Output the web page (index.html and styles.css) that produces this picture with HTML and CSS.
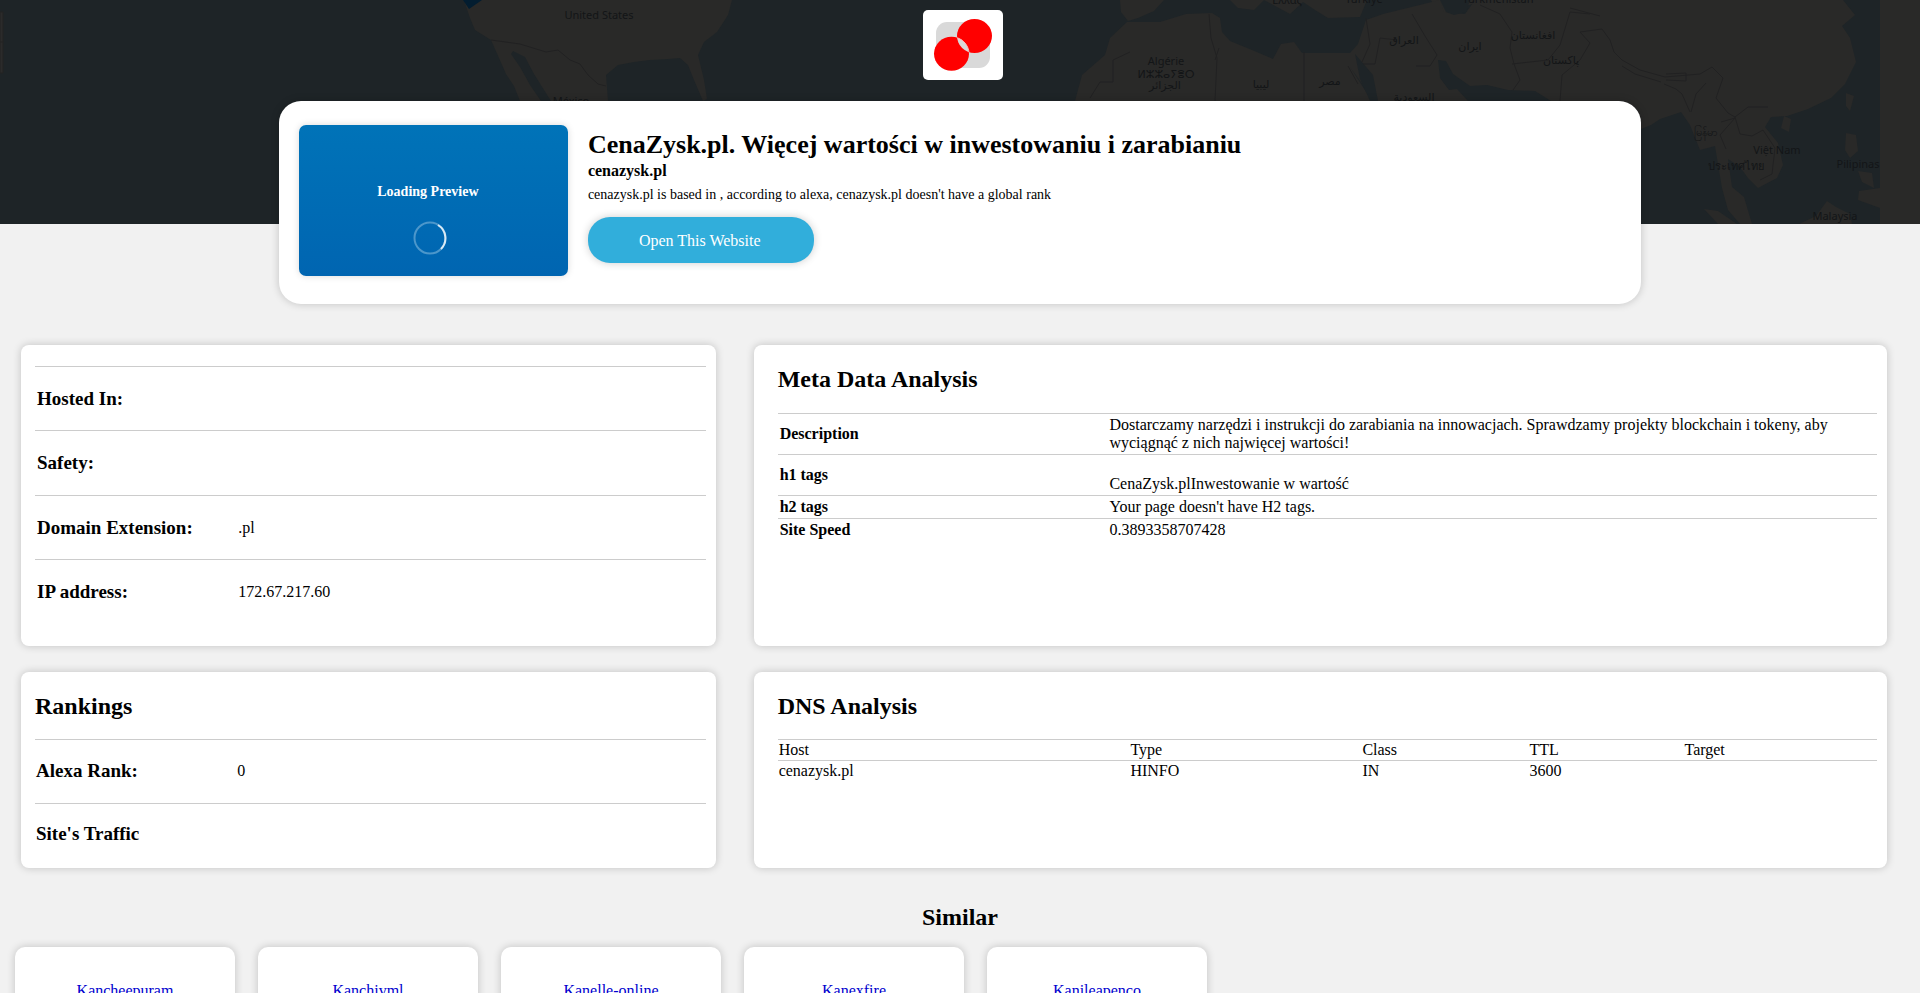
FILE: index.html
```html
<!DOCTYPE html>
<html lang="en">
<head>
<meta charset="utf-8">
<meta name="viewport" content="width=device-width, initial-scale=1">
<title>cenazysk.pl</title>
<link rel="stylesheet" href="styles.css">
</head>
<body>
<header class="hero">
  <svg class="map" viewBox="0 0 1920 224" preserveAspectRatio="xMidYMin slice" aria-hidden="true">
    <rect class="sea" width="1920" height="224"/>
    <path class="zoom-box" d="M0 12H3V73H0zM0 42H3"/>
    <g class="land">
      <path d="M464 0L470 18L475 30L491 40L499 58L506 74L514 86L520 101H541L530 85L520 67L511 54L513 51L525 57L534 74L551 101H608L606 75L618 65L634 62L650 60L668 59L680 58L688 65L694 80L703 101L707 99L704 80L698 55L704 42L717 32L728 15L732 0Z"/>
      <path d="M1120 0L1121 12L1128 21L1138 18L1154 11L1164 0H1230L1238 8L1254 10L1264 0L1290 14L1303 2L1315 10L1328 18L1360 17L1367 0H1484L1449 12L1464 24L1439 15L1431 0Z"/>
      <path d="M1127 22L1160 22L1186 14L1212 13L1220 18L1222 32L1230 41L1252 50L1273 59L1281 44L1294 42L1302 53L1350 53L1358 44L1366 20L1383 14L1440 0L1444 12L1465 14L1475 0H1843L1855 15L1842 26L1850 38L1856 62L1845 84L1831 98L1808 109L1787 116L1771 117L1765 127L1778 143L1783 165L1777 178L1758 188L1748 178L1740 167L1728 159L1732 187L1744 197L1752 224H1740L1728 210L1722 188L1715 146L1700 150L1690 125L1681 112L1660 119L1651 125L1641 129H1366L1375 104L1363 85L1350 67L1374 104H1090L1075 101L1082 75L1105 55L1110 38Z"/>
      <path d="M1846 93L1854 96L1850 111L1846 106ZM1784 116L1791 119L1789 132L1781 128ZM1846 133L1856 135L1858 151L1850 158L1845 150ZM1858 171L1872 173L1874 188L1862 182ZM1859 191L1880 188V208L1858 200ZM1704 209L1718 211L1737 224H1718ZM1827 201L1836 207L1850 214L1852 224H1799L1816 216Z"/>
      <path d="M1880 0H1920V224H1880Z"/>
    </g>
    <g class="sea">
      <path d="M1355 54L1373 75L1378 101H1370L1360 79ZM1438 60L1446 61L1453 74L1470 86L1487 85L1508 90L1535 91L1551 101H1468L1457 89L1449 90L1440 78Z"/>
      <path d="M1440 0H1470L1466 12L1454 15L1446 12Z"/>
    </g>
    <path class="deep" d="M463 0H482L469 9Z"/>
    <g class="borders">
      <path d="M491 40L520 44L546 52L558 50L570 60L580 64L588 75L598 84L606 86"/>
      <path d="M1209 14L1211 38L1217 58L1215 101M1219 48L1215 60M1304 52V101M1090 98L1100 82H1113V60L1130 52M1348 66L1358 84M1363 64H1375L1380 38L1397 40M1366 18L1370 44L1362 62M1412 14L1425 36L1437 55L1430 66H1416"/>
      <path d="M1480 5L1500 14L1512 32L1510 48L1514 64L1520 80L1513 90M1512 64L1548 60L1560 45L1570 12L1590 14M1570 8L1600 16M1560 101L1562 75L1580 60L1590 43L1580 32L1602 29L1610 40L1614 52L1622 60L1640 70L1665 77L1700 74L1712 67L1723 78L1716 98L1728 113L1735 117L1748 107L1768 107M1622 66L1635 74L1661 82M1666 74L1686 73V81L1666 80M1664 84L1676 89L1682 94L1690 112M1691 112L1696 94L1706 83M1735 117L1740 134L1752 136L1763 130L1775 148L1772 174L1760 180M1721 122L1735 118L1720 135L1726 149"/>
    </g>
    <g class="labels">
      <text x="599" y="19">United States</text>
      <text x="571" y="105">México</text>
      <text x="1166" y="65">Algérie</text>
      <text x="1166" y="78">ⵍⵣⵣⴰⵢⴻⵔ</text>
      <text x="1165" y="89">الجزائر</text>
      <text x="1261" y="88">ليبيا</text>
      <text x="1330" y="85">مصر</text>
      <text x="1414" y="101">السعودية</text>
      <text x="1404" y="44">العراق</text>
      <text x="1470" y="50">ايران</text>
      <text x="1533" y="39">افغانستان</text>
      <text x="1561" y="64">پاکستان</text>
      <text x="1287" y="4">Ελλάς</text>
      <text x="1364" y="3">Türkiye</text>
      <text x="1498" y="3">Türkmenistan</text>
      <text x="1705" y="136">မြန်မာ</text>
      <text x="1777" y="154">Việt Nam</text>
      <text x="1736" y="170">ประเทศไทย</text>
      <text x="1858" y="168">Pilipinas</text>
      <text x="1835" y="220">Malaysia</text>
    </g>
  </svg>
  <svg class="logo" viewBox="0 0 80 70" role="img" aria-label="Site logo">
    <defs><clipPath id="upper"><ellipse cx="51.5" cy="26" rx="17.5" ry="17"/></clipPath></defs>
    <rect x="13" y="12" width="54" height="46" rx="11" fill="#d9d9d9"/>
    <ellipse cx="51.5" cy="26" rx="17.5" ry="17" fill="#f00"/>
    <ellipse cx="28.5" cy="43.8" rx="17.5" ry="17" fill="#f00"/>
    <ellipse cx="28.5" cy="43.8" rx="17.5" ry="17" fill="#d9d9d9" stroke="#fbb" clip-path="url(#upper)"/>
  </svg>
  <section class="site">
    <div class="preview">
      <strong>Loading Preview</strong>
      <svg class="spinner" viewBox="0 0 34 34" aria-hidden="true"><circle cx="17" cy="17" r="15.5" stroke="#4c97cb"/><path d="M25 4A15.5 15.5 0 0 1 28 28" stroke="#d9eaf5"/></svg>
    </div>
    <div class="about">
      <h1>CenaZysk.pl. Więcej wartości w inwestowaniu i zarabianiu</h1>
      <h2>cenazysk.pl</h2>
      <p>cenazysk.pl is based in , according to alexa, cenazysk.pl doesn't have a global rank</p>
      <a class="open" href="#">Open This Website</a>
    </div>
  </section>
</header>
<main>
  <div class="panels">
    <section class="panel facts">
      <table>
        <tr><th scope="row">Hosted In:</th><td></td></tr>
        <tr><th scope="row">Safety:</th><td></td></tr>
        <tr><th scope="row">Domain Extension:</th><td>.pl</td></tr>
        <tr><th scope="row">IP address:</th><td>172.67.217.60</td></tr>
      </table>
    </section>
    <section class="panel meta">
      <h2>Meta Data Analysis</h2>
      <table>
        <tr><th scope="row">Description</th><td>Dostarczamy narzędzi i instrukcji do zarabiania na innowacjach. Sprawdzamy projekty blockchain i tokeny, aby wyciągnąć z nich najwięcej wartości!</td></tr>
        <tr><th scope="row">h1 tags</th><td><br>CenaZysk.plInwestowanie w wartość</td></tr>
        <tr><th scope="row">h2 tags</th><td>Your page doesn't have H2 tags.</td></tr>
        <tr><th scope="row">Site Speed</th><td>0.3893358707428</td></tr>
      </table>
    </section>
    <section class="panel facts ranks">
      <h2>Rankings</h2>
      <table>
        <tr><th scope="row">Alexa Rank:</th><td>0</td></tr>
        <tr><th scope="row">Site's Traffic</th><td></td></tr>
      </table>
    </section>
    <section class="panel dns">
      <h2>DNS Analysis</h2>
      <table>
        <tr><th class="host" scope="col">Host</th><th class="type" scope="col">Type</th><th class="class" scope="col">Class</th><th class="ttl" scope="col">TTL</th><th scope="col">Target</th></tr>
        <tr><td>cenazysk.pl</td><td>HINFO</td><td>IN</td><td>3600</td><td></td></tr>
      </table>
    </section>
  </div>
  <h2 class="similar-title">Similar</h2>
  <nav class="similar" aria-label="Similar sites">
    <a href="#">Kancheepuram</a>
    <a href="#">Kanchivml</a>
    <a href="#">Kanelle-online</a>
    <a href="#">Kanexfire</a>
    <a href="#">Kanileapenco</a>
  </nav>
</main>
</body>
</html>
```
FILE: styles.css
```css
* { box-sizing: border-box; }
body {
  margin: 0;
  background: #f1f1f1;
  color: #000;
  font: 16px/18px "Liberation Serif", "Times New Roman", serif;
}
h1, h2, p { margin: 0; }

.hero {
  position: relative;
  display: flex;
  flex-direction: column;
  align-items: center;
  gap: 21px;
  padding: 10px 0 41px;
}
.map {
  position: absolute;
  inset: 0 0 auto;
  z-index: -1;
  width: 100%;
  height: 224px;
}
.map .sea { fill: #1e2427; }
.map .land { fill: #292928; }
.map .deep { fill: #031d30; }
.map .zoom-box { fill: #2b2b2b; stroke: #222; }
.map .borders { fill: none; stroke: #212122; }
.map .labels {
  fill: #131517;
  font: 11px "Noto Sans", "DejaVu Sans", sans-serif;
  text-anchor: middle;
}
.logo {
  width: 80px;
  height: 70px;
  margin-left: 6px;
  border-radius: 5px;
  background: #fff;
}

.site {
  display: flex;
  gap: 20px;
  width: calc(71% - 1px);
  min-height: 203px;
  padding: 24px 20px;
  border-radius: 22px;
  background: #fff;
  box-shadow: 0 0 8px rgba(0, 0, 0, .2);
}
.preview {
  display: flex;
  flex-direction: column;
  align-items: center;
  gap: 20px;
  width: 269px;
  height: 151px;
  padding: 58px 7px 0 0;
  border-radius: 7px;
  background: linear-gradient(#0073b8, #0065b1);
  box-shadow: 0 0 7px rgba(0, 0, 0, .15);
  color: #fff;
  font-size: 14px;
}
.preview strong { margin-right: 4px; }
.spinner { width: 34px; height: 34px; fill: none; stroke-width: 2; }
.about h1 { padding-top: 4px; font-size: 26px; line-height: 32px; }
.about h2 { padding-top: 1px; font-size: 16px; line-height: 18px; }
.about p { padding: 6px 0 13px; font-size: 14px; }
.open {
  display: inline-block;
  padding: 15px 53px 13px 51px;
  border-radius: 22px;
  background: #31aedb;
  box-shadow: 0 0 8px rgba(0, 0, 0, .2);
  color: #fff;
  text-decoration: none;
}

.panels {
  display: grid;
  grid-template-columns: 38fr 62fr;
  gap: 26px 38px;
  padding: 0 33px 0 21px;
}
.panel {
  padding: 20px 10px 0 24px;
  border-radius: 8px;
  background: #fff;
  box-shadow: 0 0 8px rgba(0, 0, 0, .2);
}
.panel h2 { font-size: 24px; line-height: 28px; padding-bottom: 20px; }
.panel table { width: 100%; border-collapse: collapse; }
.panel th { text-align: left; }
.panel tr { border-top: 1px solid #ccc; }
.panel th, .panel td { padding: 2px; }
.facts { padding-top: 21px; padding-left: 14px; min-height: 301px; }
.facts table { height: 257px; }
.facts th { width: 30%; font-size: 19px; }
.meta th { width: 30%; }
.ranks { padding-top: 20px; min-height: 196px; }
.ranks h2, .dns h2 { padding-bottom: 19px; }
.ranks table { height: 126px; }
.ranks th, .ranks td { padding: 1px; }
.dns th, .dns td { padding: 1px; font-weight: normal; }
.dns .host { width: 32%; }
.dns .type { width: 21.1%; }
.dns .class { width: 15.2%; }
.dns .ttl { width: 14.1%; }

.similar-title {
  padding: 34px 0 15px;
  font-size: 24px;
  line-height: 30px;
  text-align: center;
}
.similar {
  display: flex;
  flex-wrap: wrap;
  gap: 23px;
  padding: 0 15px;
}
.similar a {
  width: 220px;
  padding: 35px 10px;
  border-radius: 10px;
  background: #fff;
  box-shadow: 0 0 8px rgba(0, 0, 0, .2);
  color: #0000ce;
  text-align: center;
  text-decoration: none;
}
```
